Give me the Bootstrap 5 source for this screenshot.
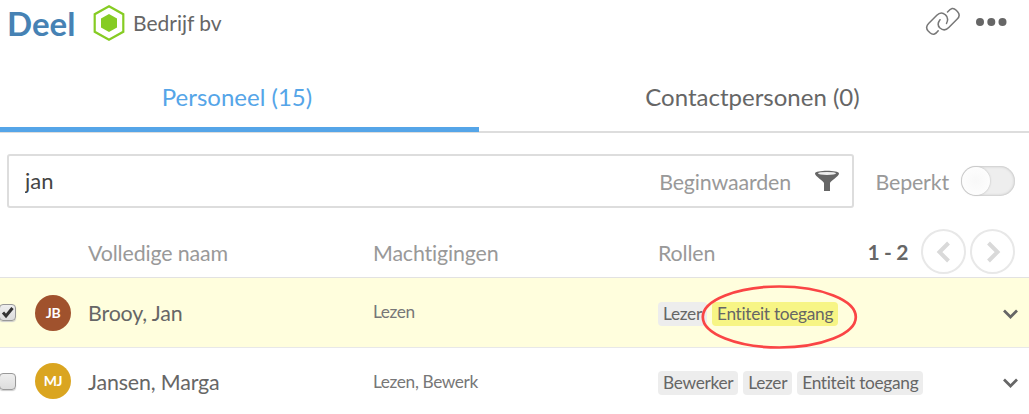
<!DOCTYPE html>
<html lang="nl">
<head>
<meta charset="utf-8">
<meta name="viewport" content="width=device-width, initial-scale=1">
<title>Deel</title>
<link href="https://cdn.jsdelivr.net/npm/bootstrap@5.3.0/dist/css/bootstrap.min.css" rel="stylesheet">
<style>
body{font-family:Lato,"Liberation Sans",sans-serif;font-size:21.4px;line-height:28px;letter-spacing:-.15px;font-variant-ligatures:none;color:#666;overflow:hidden;background:#fff}
svg{display:block;flex:none}
.topbar{height:46px;padding:0 22px 0 7px}
.page-title{font-size:33px;line-height:46px;font-weight:700;color:#4682b4;width:85px;margin:0;letter-spacing:0}
.company{font-size:21px;margin-left:7px;letter-spacing:0}
.share-tabs{height:87px;border-bottom:2px solid #ddd;flex-wrap:nowrap;letter-spacing:0}
.share-tabs .nav-link{height:86px;padding:37px 0 0;font-size:24px;line-height:28px;color:#666;text-align:center;border-bottom:5px solid transparent;border-radius:0}
.share-tabs .nav-link.active{color:#55a5e8;border-color:#55a5e8;padding-right:5px}
.tab-first{width:479px}
.tab-second{padding-right:3px}
.filters{padding:21px 14px 0 7px}
.search-box{width:847px;height:54px;border:2px solid #ddd;border-radius:3px;padding:0 12px 0 16px}
.search-box input{border:0;outline:0;padding:0;color:#444;background:none;min-width:0;font-size:22px}
.muted{color:#999;padding-top:2px}
.toggle{width:54px;height:30px;border-radius:15px;background:#eee;box-shadow:inset 0 0 3px #aaa}
.toggle span{display:block;width:28px;height:28px;margin:1px;border-radius:50%;background:radial-gradient(#f8f8f8,#fff);box-shadow:0 0 2px #aaa}
.line{display:grid;grid-template-columns:88px 285px 285px 1fr;align-items:center}
.heads{height:70px;border-bottom:1px solid #e2e2e2;color:#999;padding-top:18px}
.heads span{padding-top:2px}
.heads .range{color:#666;margin-right:13px;font-size:21px;letter-spacing:-.4px}
.person{height:70px;border-bottom:1px solid #e8e8e8}
.person:last-child{height:68px;border-bottom:0}
.person:last-child .mark-cell{padding-bottom:2px}
.selected{background:#fffedd}
.round{width:45px;height:45px;border:2px solid #e8e8e8;border-radius:50%;background:#fff;padding:0}
.tick{width:17px;height:17px;margin-left:-1px;border:1px solid #999;border-radius:4px;background:linear-gradient(#eee,#ddd);box-shadow:0 1px 1px #ccc}
.initials{width:36px;height:36px;border-radius:50%;color:#fff;font-size:14px;font-weight:700;letter-spacing:-.4px;margin-left:19px}
.rights{font-size:17.3px;line-height:24px;letter-spacing:-.38px;color:#777;padding-bottom:1px}
.roles{gap:5px;padding-top:2px}
.role{font-size:17.3px;line-height:24px;letter-spacing:-.3px;height:24px;padding:0 5px;border-radius:4px;background:#ededed;color:#666;white-space:nowrap}
.role-marked{background:#f7f585}
.ring{position:absolute;left:700px;top:283px;pointer-events:none}
</style>
</head>
<body>
<header class="topbar d-flex align-items-center">
  <h1 class="page-title">Deel</h1>
  <svg width="34" height="38" viewBox="0 0 34 38"><path d="M17 2.3 31.3 10.2V27.8L17 35.7 2.7 27.8V10.2Z" fill="none" stroke="#86cc23" stroke-width="2.2"/><path d="M17 10 25 14.6V23.4L17 28 9 23.4V14.6Z" fill="#86cc23"/></svg>
  <span class="company">Bedrijf bv</span>
  <svg class="ms-auto" width="38" height="32" viewBox="0 0 38 32"><g fill="none" stroke="#777" stroke-width="1.5" stroke-linecap="round"><path d="M22.5 16.5C24.5 12.5 23.7 9.7 21.3 7.7 18.5 5.2 15.5 5.5 12.8 8.3L4.6 16.5C1.8 19.3 2 21.5 4.2 24L6 25.8C8.6 28.2 11.2 28 14.2 23.8"/><path d="M16 12.7C13.4 16 13.3 18.4 16 21 18.8 23.5 22.2 23.2 24.8 20.5L33 12.3C36 9.4 35.7 7 33.6 4.7L32.2 3.3C29.3.3 27 1.1 23.5 5"/></g></svg>
  <svg style="margin-left:13px;margin-bottom:2px" width="32" height="10" viewBox="0 0 32 10"><g fill="#666"><circle cx="5" cy="5" r="4"/><circle cx="16.3" cy="5" r="4"/><circle cx="27.5" cy="5" r="4"/></g></svg>
</header>
<nav class="nav share-tabs">
  <div class="tab-first"><a class="nav-link active">Personeel (15)</a></div>
  <div class="tab-second flex-fill"><a class="nav-link">Contactpersonen (0)</a></div>
</nav>
<section class="filters d-flex align-items-center">
  <div class="search-box d-flex align-items-center">
    <input class="flex-fill" value="jan" aria-label="Zoeken">
    <span class="muted">Beginwaarden</span>
    <svg style="margin-left:23px" width="26" height="22" viewBox="0 0 26 22"><path d="M1 3.5C1-.1 25-.1 25 3.5 25 6.5 16 11 16 13.2V21H10V13.2C10 11 1 6.5 1 3.5Z" fill="#666"/><ellipse cx="13" cy="3.4" rx="9" ry="1.5" fill="#eee"/></svg>
  </div>
  <span class="muted ms-auto">Beperkt</span>
  <div class="toggle d-flex" style="margin-left:12px"><span></span></div>
</section>
<main>
  <div class="line heads">
    <span></span><span>Volledige naam</span><span>Machtigingen</span>
    <div class="d-flex align-items-center"><span>Rollen</span><b class="range ms-auto">1 - 2</b>
      <button class="round me-1 d-flex align-items-center justify-content-center" aria-label="Vorige"><svg width="16" height="22" viewBox="0 0 16 22"><path d="M12.5 2 3.5 11 12.5 20" fill="none" stroke="#d9d9d9" stroke-width="4"/></svg></button>
      <button class="round d-flex align-items-center justify-content-center" style="margin-right:14px" aria-label="Volgende"><svg width="16" height="22" viewBox="0 0 16 22"><path d="M3.5 2 12.5 11 3.5 20" fill="none" stroke="#d9d9d9" stroke-width="4"/></svg></button></div>
  </div>
  <div class="line person selected">
    <div class="mark-cell d-flex align-items-center"><div class="tick"><svg width="15" height="15" viewBox="0 0 15 15"><path d="M3 7.6 6 11 12.5 3" fill="none" stroke="#333" stroke-width="3"/></svg></div><div class="initials d-flex align-items-center justify-content-center" style="background:#a0522d">JB</div></div>
    <span>Brooy, Jan</span><span class="rights">Lezen</span>
    <div class="roles d-flex align-items-center"><span class="role">Lezer</span><span class="role role-marked">Entiteit toegang</span><svg class="ms-auto" style="margin-right:10px" width="17" height="12" viewBox="0 0 17 12"><path d="M2 2.5 8.5 9 15 2.5" fill="none" stroke="#666" stroke-width="2.7"/></svg></div>
  </div>
  <div class="line person">
    <div class="mark-cell d-flex align-items-center"><div class="tick"></div><div class="initials d-flex align-items-center justify-content-center" style="background:#daa520">MJ</div></div>
    <span>Jansen, Marga</span><span class="rights">Lezen, Bewerk</span>
    <div class="roles d-flex align-items-center"><span class="role">Bewerker</span><span class="role">Lezer</span><span class="role">Entiteit toegang</span><svg class="ms-auto" style="margin-right:10px" width="17" height="12" viewBox="0 0 17 12"><path d="M2 2.5 8.5 9 15 2.5" fill="none" stroke="#666" stroke-width="2.7"/></svg></div>
  </div>
</main>
<svg class="ring" width="160" height="68" viewBox="0 0 160 68"><ellipse cx="79.3" cy="34" rx="76.5" ry="30.5" fill="none" stroke="#fa4545" stroke-width="2.7"/></svg>
<script src="https://cdn.jsdelivr.net/npm/bootstrap@5.3.0/dist/js/bootstrap.bundle.min.js"></script>
</body>
</html>
